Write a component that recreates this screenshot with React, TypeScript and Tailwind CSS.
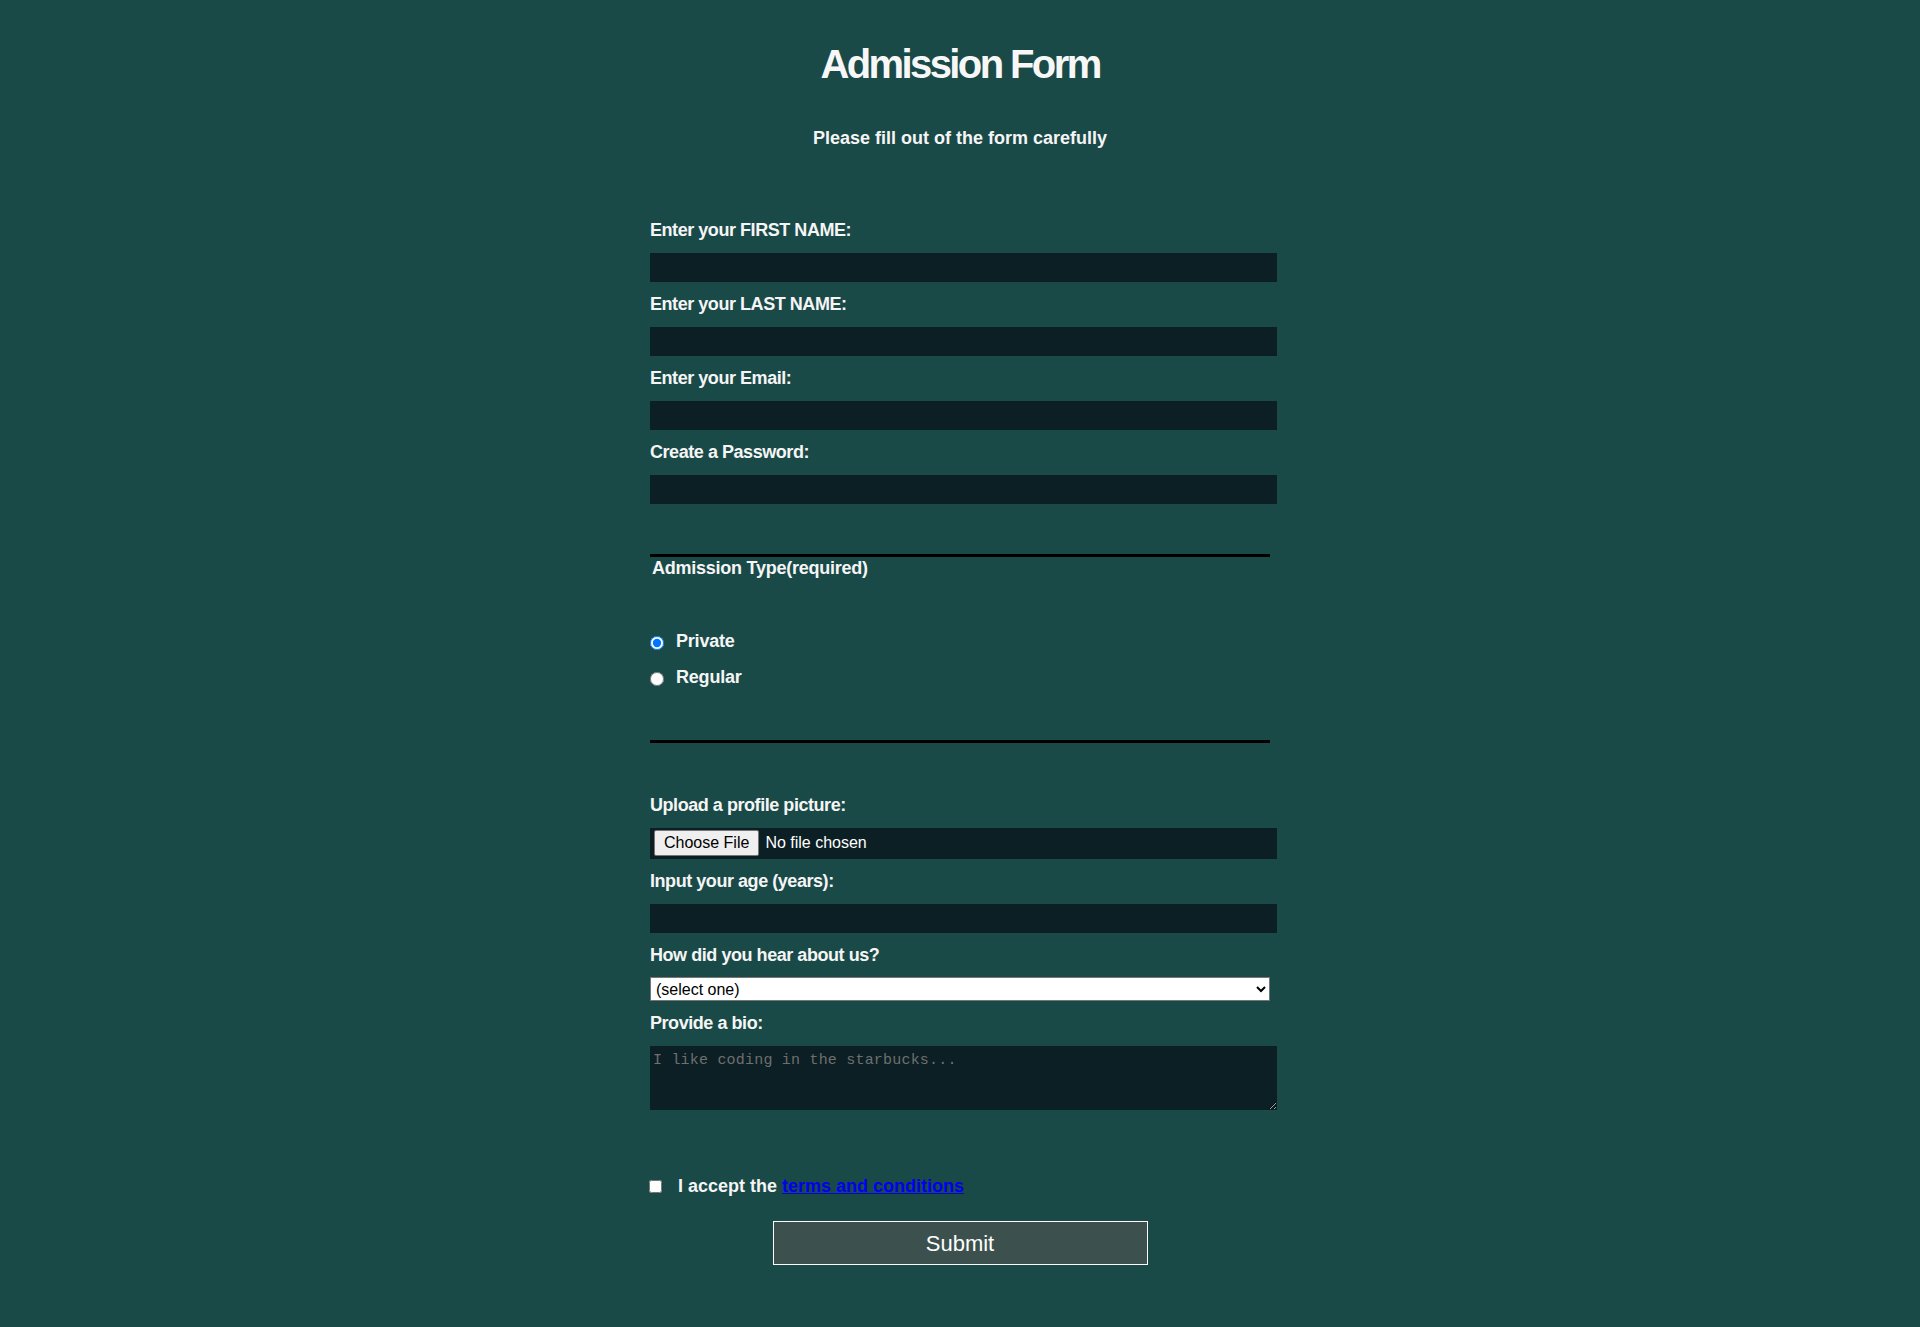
const fields = [
  { label: "Enter your FIRST NAME:", type: "text" },
  { label: "Enter your LAST NAME:", type: "text" },
  { label: "Enter your Email:", type: "email" },
  { label: "Create a Password:", type: "password" },
];

const labelCls =
  "block text-[18px] leading-[22px] font-bold tracking-[-0.45px] text-[#f5f5f5]";
const inputCls =
  "block w-[627px] h-[29px] mt-[12px] bg-[#0b1f24] text-white px-[3px] outline-none";

const App = () => {
  const handleSubmit = (e: React.SyntheticEvent) => {
    e.preventDefault();
  };

  return (
    <div className="min-h-[1327px] bg-[#1a4a48] pt-[40px] font-['Liberation_Sans',Arial,sans-serif] text-[#f5f5f5]">
      <h1 className="text-center text-[40px] leading-[48px] font-bold tracking-[-2.6px] text-[#f7f7f7]">
        Admission Form
      </h1>
      <p className="mt-[39px] text-center text-[18px] leading-[22px] font-bold">
        Please fill out of the form carefully
      </p>

      <form onSubmit={(e) => handleSubmit(e)} className="w-[620px] mx-auto mt-[70px]">
        {/* basic details */}
        <div className="flex flex-col gap-[11px]">
          {fields.map((f, i) => (
            <div key={i}>
              <label className={labelCls}>{f.label}</label>
              <input type={f.type} className={inputCls} />
            </div>
          ))}
        </div>

        {/* Admission type */}
        <div className="mt-[50px] border-t-[3px] border-b-[3px] border-black pb-[52px]">
          <div className="ml-[2px] text-[18px] leading-[22px] font-bold tracking-[-0.25px]">
            Admission Type(required)
          </div>
          <div className="mt-[51px] flex flex-col gap-[14px]">
            <label className="flex items-start gap-[12px] text-[18px] leading-[22px] font-bold tracking-[-0.2px]">
              <input type="radio" name="type" defaultChecked className="m-0 mt-[6px] w-[14px] h-[14px]" />
              Private
            </label>
            <label className="flex items-start gap-[12px] text-[18px] leading-[22px] font-bold tracking-[-0.2px]">
              <input type="radio" name="type" className="m-0 mt-[6px] w-[14px] h-[14px]" />
              Regular
            </label>
          </div>
        </div>

        {/* other details */}
        <div className="mt-[51px] flex flex-col gap-[11px]">
          <div>
            <label className={labelCls}>Upload a profile picture:</label>
            <input
              type="file"
              className="block w-[627px] h-[31px] mt-[12px] bg-[#0b1f24] text-white text-[16px] pl-[4px] file:mr-[6px] file:h-[26px] file:px-[9px] file:bg-[#efefef] file:text-black file:border file:border-[#767676] file:rounded-[2px] file:mt-[2px]"
            />
          </div>
          <div>
            <label className={labelCls}>Input your age (years):</label>
            <input type="number" className={inputCls} />
          </div>
          <div>
            <label className={labelCls}>How did you hear about us?</label>
            <select className="block w-[620px] h-[24px] mt-[11px] bg-white text-black text-[16px] border border-[#767676] pl-[1px]">
              <option>(select one)</option>
              <option>Friends</option>
              <option>Social media</option>
              <option>Other</option>
            </select>
          </div>
          <div>
            <label className={labelCls}>Provide a bio:</label>
            <textarea
              placeholder="I like coding in the starbucks..."
              className="block w-[627px] h-[64px] mt-[12px] bg-[#0b1f24] text-white px-[3px] pt-[6px] font-['Liberation_Mono',monospace] text-[15px] leading-[18px] tracking-[0.2px] placeholder:text-[#6f6f6f] outline-none"
            />
          </div>
        </div>

        {/* terms */}
        <div className="mt-[65px] -ml-px flex items-start gap-[16px] text-[18px] leading-[22px] font-bold">
          <input type="checkbox" className="m-0 mt-[5px] w-[13px] h-[13px]" />
          <span>
            I accept the{" "}
            <a href="#" className="text-[#0000ee] underline">
              terms and conditions
            </a>
          </span>
        </div>

        <button
          type="submit"
          className="block mx-auto mt-[24px] w-[375px] h-[44px] border border-white bg-[#3c514e] text-[22px] text-white"
        >
          Submit
        </button>
      </form>
    </div>
  );
};

export default App;
